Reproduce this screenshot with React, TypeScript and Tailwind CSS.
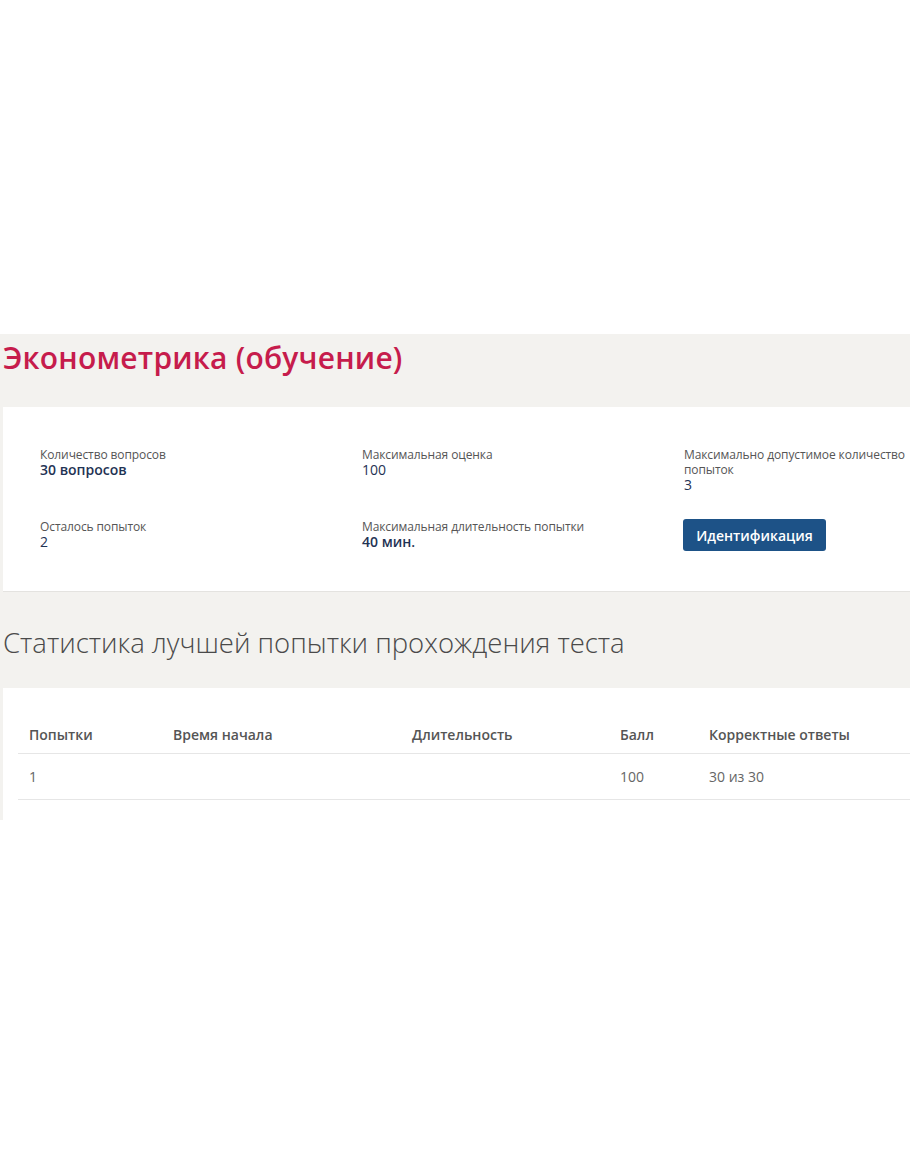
const info = [
  { label: "Количество вопросов", value: "30 вопросов", bold: true },
  { label: "Максимальная оценка", value: "100", bold: false },
  { label: "Максимально допустимое количество попыток", value: "3", bold: false },
  { label: "Осталось попыток", value: "2", bold: false },
  { label: "Максимальная длительность попытки", value: "40 мин.", bold: true },
];

const cols = [
  { title: "Попытки", w: "w-[144px]" },
  { title: "Время начала", w: "w-[239px]" },
  { title: "Длительность", w: "w-[208px]" },
  { title: "Балл", w: "w-[89px]" },
  { title: "Корректные ответы", w: "" },
];

const row = ["1", "", "", "100", "30 из 30"];

const InfoItem = ({ label, value, bold }: { label: string; value: string; bold: boolean }) => (
  <div className="flex flex-col">
    <span className="text-[12px] leading-[15px] text-[#555] tracking-[-0.1px]">{label}</span>
    <span className={"text-[14px] leading-[16px] text-[#1f3354] " + (bold ? "font-semibold" : "font-normal")}>
      {value}
    </span>
  </div>
);

export default function App() {
  return (
    <div className="w-[910px] min-h-[1155px] bg-white overflow-hidden font-['Open_Sans',sans-serif]">
      <div className="h-[334px]" />
      <div className="bg-[#f3f2ef] pl-[3px]">
        <div className="h-[73px] flex items-start pt-[3px]">
          <h1 className="text-[30px] leading-[42px] font-semibold text-[#c61c4c] tracking-[0.2px]">
            Эконометрика (обучение)
          </h1>
        </div>

        <div className="bg-white h-[185px] border-b border-[#e4e3e0] pl-[37px] pt-[40px]">
          <div className="grid grid-cols-[322px_322px_240px] gap-y-[26px] items-start">
            <InfoItem {...info[0]} />
            <InfoItem {...info[1]} />
            <InfoItem {...info[2]} />
            <InfoItem {...info[3]} />
            <InfoItem {...info[4]} />
            <div>
              <button className="h-[32px] w-[143px] -ml-[1px] rounded-[3px] bg-[#1d5287] text-white text-[14px] font-semibold">
                Идентификация
              </button>
            </div>
          </div>
        </div>

        <div className="h-[96px] flex items-center pt-[6px]">
          <h2 className="text-[27.5px] font-light text-[#4a4a4a]">
            Статистика лучшей попытки прохождения теста
          </h2>
        </div>

        <div className="bg-white h-[132px] pl-[15px] pt-[29px]">
          <table className="w-full border-collapse text-[14px]">
            <thead>
              <tr className="border-b border-[#e6e6e6]">
                {cols.map((c) => (
                  <th key={c.title} className={"h-[36px] pl-[11px] text-left font-semibold text-[#555] " + c.w}>
                    {c.title}
                  </th>
                ))}
              </tr>
            </thead>
            <tbody>
              <tr className="border-b border-[#e6e6e6]">
                {row.map((v, i) => (
                  <td key={i} className="h-[46px] pl-[11px] text-[#666]">
                    {v}
                  </td>
                ))}
              </tr>
            </tbody>
          </table>
        </div>
      </div>
    </div>
  );
}
